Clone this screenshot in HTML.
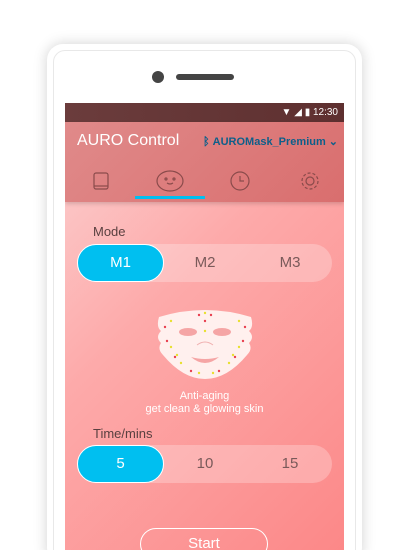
<!DOCTYPE html><html><head><style>
html,body{margin:0;width:409px;height:550px;overflow:hidden}
body{background:#fff;font-family:"Liberation Sans",sans-serif;position:relative}
.phone{position:absolute;left:47px;top:44px;width:315px;height:520px;border-radius:16px;background:#fff;box-shadow:0 0 14px rgba(0,0,0,.18)}
.inner{position:absolute;left:53px;top:50px;width:303px;height:520px;border-radius:12px;border:1px solid #e8e8e8;box-sizing:border-box}
.cam{position:absolute;left:152px;top:71px;width:12px;height:12px;border-radius:50%;background:#444}
.spk{position:absolute;left:176px;top:74px;width:58px;height:6px;border-radius:3px;background:#444}
.scr{position:absolute;left:65px;top:103px;width:279px;height:447px;overflow:hidden;background:linear-gradient(135deg,#fcd2d2 0%,#fdaaaa 40%,#fc8888 100%)}
.sb{height:19px;background:linear-gradient(90deg,#6b3c3c,#5e3030);color:#fff;font-size:10px;text-align:right;padding-right:6px;line-height:19px;box-sizing:border-box}
.hd{height:80px;background:linear-gradient(135deg,#e08a8a,#d96e6e);position:relative;box-shadow:0 2px 4px rgba(0,0,0,.15)}
.t{position:absolute;color:#fff}
.seg{position:absolute;left:12px;width:255px;height:38px;border-radius:19px;background:rgba(255,255,255,.25)}
.pill{position:absolute;left:0;top:0;width:87px;height:38px;border-radius:19px;background:#00bff0;border:1.5px solid #fff;box-sizing:border-box;color:#fff;text-align:center;line-height:35px;font-size:15px}
.o{position:absolute;top:0;line-height:38px;font-size:15px;color:#7a5a5a;width:60px;text-align:center}
</style></head><body>
<div class="phone"></div><div class="inner"></div><div class="cam"></div><div class="spk"></div>
<div class="scr">
<div class="sb">▼ ◢ ▮ 12:30</div>
<div class="hd">
<div class="t" style="left:12px;top:10px;font-size:16px">AURO Control</div>
<div class="t" style="left:138px;top:13px;font-size:11px;color:#0d5f8a;font-weight:bold">ᛒ AUROMask_Premium ⌄</div>
<svg style="position:absolute;left:0;top:46px" width="279" height="34" fill="none" stroke="#8a4b4b" stroke-width="1.2">
<rect x="29" y="5" width="14" height="16" rx="2"/><line x1="29" y1="18" x2="43" y2="18"/>
<ellipse cx="105" cy="13" rx="13" ry="10"/><circle cx="101" cy="11" r="1"/><circle cx="109" cy="11" r="1"/><path d="M102 15q3 2 6 0"/>
<circle cx="175" cy="13" r="9"/><path d="M175 8v5h4"/>
<circle cx="245" cy="13" r="4"/><circle cx="245" cy="13" r="8" stroke-dasharray="3 2"/>
<rect x="70" y="28" width="70" height="3" fill="#00bff0" stroke="none"/>
</svg></div>
<div class="t" style="left:28px;top:121px;font-size:13px;color:#5a4040">Mode</div>
<div class="seg" style="top:141px"><div class="pill">M1</div><div class="o" style="left:98px">M2</div><div class="o" style="left:183px">M3</div></div>
<svg style="position:absolute;left:90px;top:204px" width="100" height="72">
<path d="M4 10Q50 -4 96 10Q99 20 94 24Q100 30 94 36Q98 42 92 48Q72 72 50 72Q28 72 8 48Q2 42 6 36Q0 30 6 24Q1 20 4 10Z" fill="#fff0ee"/>
<ellipse cx="33" cy="25" rx="9" ry="4" fill="#f5a5a5"/><ellipse cx="67" cy="25" rx="9" ry="4" fill="#f5a5a5"/>
<path d="M42 38q8 -6 16 0" stroke="#f0b0b0" fill="none"/>
<path d="M36 50Q50 62 64 50Q50 54 36 50Z" fill="#f5a5a5"/>
<g fill="#e8e030"><circle cx="16" cy="14" r="1.2"/><circle cx="84" cy="14" r="1.2"/><circle cx="50" cy="6" r="1.2"/><circle cx="50" cy="24" r="1.2"/><circle cx="16" cy="40" r="1.2"/><circle cx="84" cy="40" r="1.2"/><circle cx="26" cy="56" r="1.2"/><circle cx="74" cy="56" r="1.2"/><circle cx="44" cy="66" r="1.2"/><circle cx="58" cy="66" r="1.2"/><circle cx="22" cy="48" r="1.2"/><circle cx="78" cy="48" r="1.2"/></g>
<g fill="#e84050"><circle cx="10" cy="20" r="1.2"/><circle cx="90" cy="20" r="1.2"/><circle cx="44" cy="8" r="1.2"/><circle cx="56" cy="8" r="1.2"/><circle cx="12" cy="34" r="1.2"/><circle cx="88" cy="34" r="1.2"/><circle cx="20" cy="50" r="1.2"/><circle cx="80" cy="50" r="1.2"/><circle cx="36" cy="64" r="1.2"/><circle cx="64" cy="64" r="1.2"/><circle cx="50" cy="14" r="1.2"/></g>
</svg>
<div class="t" style="left:0;width:279px;text-align:center;top:287px;font-size:11px;line-height:13px">Anti-aging<br>get clean &amp; glowing skin</div>
<div class="t" style="left:28px;top:323px;font-size:13px;color:#5a4040">Time/mins</div>
<div class="seg" style="top:342px"><div class="pill">5</div><div class="o" style="left:98px">10</div><div class="o" style="left:183px">15</div></div>
<div style="position:absolute;left:75px;top:425px;width:128px;height:32px;border:1.5px solid #fff;border-radius:16px;box-sizing:border-box;color:#fff;text-align:center;line-height:30px;font-size:15px">Start</div>
</div>
</body></html>
